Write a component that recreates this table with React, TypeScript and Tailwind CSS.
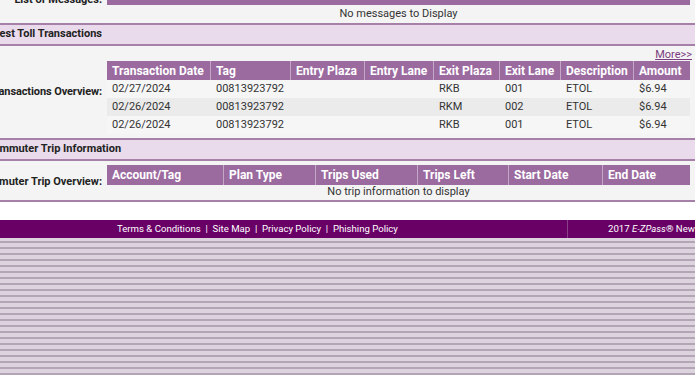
import React from "react";

const txCols = [104, 80, 74, 69, 66, 61, 73, 56];
const txHead = ["Transaction Date", "Tag", "Entry Plaza", "Entry Lane", "Exit Plaza", "Exit Lane", "Description", "Amount"];
const txRows = [
  ["02/27/2024", "00813923792", "", "", "RKB", "001", "ETOL", "$6.94"],
  ["02/26/2024", "00813923792", "", "", "RKM", "002", "ETOL", "$6.94"],
  ["02/26/2024", "00813923792", "", "", "RKB", "001", "ETOL", "$6.94"],
];
const ctCols = [117, 92, 102, 91, 94, 87];
const ctHead = ["Account/Tag", "Plan Type", "Trips Used", "Trips Left", "Start Date", "End Date"];

function HeadRow({ cols, heads, h }: { cols: number[]; heads: string[]; h: string }) {
  return (
    <div className={`flex bg-[#9b6a9f] ${h}`}>
      {heads.map((t, i) => (
        <div
          key={i}
          style={{ width: cols[i] }}
          className="flex items-center pl-[5px] text-[12px] font-bold text-white border-r border-[#c4a6c6] last:border-r-0 whitespace-nowrap overflow-hidden"
        >
          {t}
        </div>
      ))}
    </div>
  );
}

export default function App() {
  return (
    <div className="w-[695px] h-[375px] overflow-hidden bg-white font-['Roboto',sans-serif] text-[11px] text-[#2a2a2a]">
      <div className="ml-[-20px] w-[715px]">
        <div className="bg-[#f4f4f4]">
          {/* Messages */}
          <div className="flex mt-[-13px]">
            <div className="w-[127px] pr-[5px] text-right font-bold pt-[6px] leading-[13px] text-[11px] text-[#222] whitespace-nowrap">
              List of Messages:
            </div>
            <div className="w-[583px]">
              <div className="h-[18px] bg-[#9b6a9f]" />
              <div className="h-[18px] flex items-center justify-center text-[#333]">No messages to Display</div>
            </div>
          </div>

          {/* Section header */}
          <div className="h-[23px] border-y-2 border-[#a680a9] bg-[#e9dbeb] flex items-center pl-[4px] font-bold text-[11px] text-[#222]">
            Latest Toll Transactions
          </div>

          {/* Transactions */}
          <div className="flex">
            <div className="w-[127px] pr-[5px] pt-[5px] flex items-center justify-end font-bold text-[#222] whitespace-nowrap tracking-[-0.1px]">
              Transactions Overview:
            </div>
            <div className="w-[588px]">
              <div className="h-[15px] flex items-end justify-end pr-[3px]">
                <span className="underline text-[#7b3c80] leading-[13px]">More&gt;&gt;</span>
              </div>
              <div className="w-[583px]">
                <HeadRow cols={txCols} heads={txHead} h="h-[19px]" />
                {txRows.map((r, ri) => (
                  <div key={ri} className={`flex h-[18px] ${ri === 1 ? "bg-[#ebebeb]" : "bg-[#f6f6f6]"}`}>
                    {r.map((c, ci) => (
                      <div key={ci} style={{ width: txCols[ci] }} className="flex items-center pl-[5px] text-[#333] whitespace-nowrap">
                        {c}
                      </div>
                    ))}
                  </div>
                ))}
              </div>
            </div>
          </div>

          <div className="h-[4px]" />

          {/* Commuter header */}
          <div className="h-[23px] border-y-2 border-[#a680a9] bg-[#e9dbeb] flex items-center pl-[6px] font-bold text-[11px] text-[#222]">
            Commuter Trip Information
          </div>

          <div className="flex pt-[4px]">
            <div className="w-[127px] pr-[5px] flex items-center justify-end font-bold text-[#222] whitespace-nowrap">
              Commuter Trip Overview:
            </div>
            <div className="w-[583px]">
              <HeadRow cols={ctCols} heads={ctHead} h="h-[20px]" />
              <div className="h-[14px] flex items-center justify-center text-[#333]">No trip information to display</div>
            </div>
          </div>
          <div className="h-[1px]" />
        </div>
        <div className="h-[2px] bg-[#a680a9]" />
        <div className="h-[18px] bg-white" />

        {/* Footer */}
        <div className="flex h-[18px] bg-[#690066] text-white text-[9.6px] whitespace-nowrap">
          <div className="w-[587px] pl-[137px] flex items-center">
            Terms &amp; Conditions&nbsp;&nbsp;|&nbsp;&nbsp;Site Map&nbsp;&nbsp;|&nbsp;&nbsp;Privacy Policy&nbsp;&nbsp;|&nbsp;&nbsp;Phishing Policy
          </div>
          <div className="flex-1 border-l border-[#8a4087] pl-[40px] flex items-center overflow-hidden">
            2017&nbsp;<i>E-ZPass</i>®&nbsp;New York Service Center
          </div>
        </div>

        {/* Stripes */}
        <div className="h-[200px] bg-[repeating-linear-gradient(to_bottom,#dcd3de_0px,#dcd3de_3px,#b3a5b6_3px,#b3a5b6_5px,#dcd3de_5px,#dcd3de_6px)]" />
      </div>
    </div>
  );
}
